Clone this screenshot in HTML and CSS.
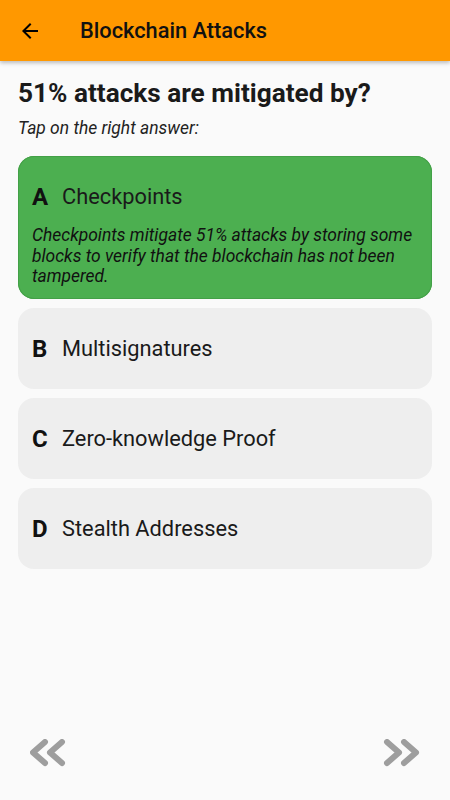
FILE: index.html
```html
<!DOCTYPE html>
<html lang="en">
<head>
  <meta charset="UTF-8">
  <title>Blockchain Attacks</title>
  <link rel="stylesheet" href="styles.css">
</head>
<body>

  <header class="app-bar">
    <button class="back-button" aria-label="Back">
      <svg viewBox="0 0 24 24" width="24" height="24"><path d="M20 11H7.83l5.59-5.59L12 4l-8 8 8 8 1.41-1.41L7.83 13H20v-2z" fill="#000"/></svg>
    </button>
    <h1 class="app-title">Blockchain Attacks</h1>
  </header>

  <main class="quiz">
    <h2 class="question">51% attacks are mitigated by?</h2>
    <p class="hint">Tap on the right answer:</p>

    <div class="answer correct">
      <div class="answer-row">
        <span class="letter">A</span>
        <span class="answer-text">Checkpoints</span>
      </div>
      <p class="explanation">Checkpoints mitigate 51% attacks by storing some blocks to verify that the blockchain has not been tampered.</p>
    </div>

    <div class="answer">
      <div class="answer-row">
        <span class="letter">B</span>
        <span class="answer-text">Multisignatures</span>
      </div>
    </div>

    <div class="answer">
      <div class="answer-row">
        <span class="letter">C</span>
        <span class="answer-text">Zero-knowledge Proof</span>
      </div>
    </div>

    <div class="answer">
      <div class="answer-row">
        <span class="letter">D</span>
        <span class="answer-text">Stealth Addresses</span>
      </div>
    </div>
  </main>

  <footer class="nav">
    <button class="nav-button" aria-label="Previous">
      <svg viewBox="0 0 40 30" width="40" height="30">
        <polyline points="15,3 3,13.5 15,24" />
        <polyline points="32,3 20,13.5 32,24" />
      </svg>
    </button>
    <button class="nav-button" aria-label="Next">
      <svg viewBox="0 0 40 30" width="40" height="30">
        <polyline points="5,3 17,13.5 5,24" />
        <polyline points="22,3 34,13.5 22,24" />
      </svg>
    </button>
  </footer>

</body>
</html>
```

FILE: styles.css
```css
html, body {
  margin: 0;
  padding: 0;
}
body {
  font-family: Roboto, "Noto Sans", Arial, sans-serif;
  background: #fafafa;
  color: rgba(0,0,0,0.87);
  width: 450px;
  height: 800px;
  display: flex;
  flex-direction: column;
  overflow: hidden;
}
.app-bar {
  height: 61px;
  background: #ff9800;
  display: flex;
  align-items: center;
  box-shadow: 0 2px 4px rgba(0,0,0,0.25);
  flex-shrink: 0;
}
.back-button {
  width: 24px;
  height: 24px;
  margin-left: 18px;
  padding: 0;
  border: none;
  background: none;
  display: flex;
}
.app-title {
  margin: 0 0 0 38px;
  font-size: 21.8px;
  font-weight: 500;
  color: #111;
}
.quiz {
  flex: 1;
  padding: 16px 18px 0;
}
.question {
  margin: 0;
  font-size: 26.2px;
  font-weight: 700;
  line-height: 32px;
  color: #1a1a1a;
}
.hint {
  margin: 8px 0 0;
  font-size: 17.45px;
  font-style: italic;
  line-height: 22px;
  color: #222;
}
.answer {
  background: #eeeeee;
  border-radius: 16px;
  padding: 12px 14px;
  margin-top: 9px;
}
.hint + .answer {
  margin-top: 17px;
}
.answer.correct {
  background: #4caf50;
  box-shadow: inset 0 0 0 1px #43a047;
}
.answer-row {
  height: 57px;
  display: flex;
  align-items: center;
}
.letter {
  width: 30px;
  font-size: 24px;
  font-weight: 700;
  color: #111;
}
.answer-text {
  font-size: 21.8px;
  color: #1a1a1a;
}
.explanation {
  margin: 0;
  font-size: 17.45px;
  font-style: italic;
  line-height: 20.7px;
  color: #111;
}
.nav {
  height: 108px;
  padding: 0 28px 0 30px;
  display: flex;
  justify-content: space-between;
  align-items: flex-start;
  flex-shrink: 0;
}
.nav-button {
  margin-top: 47px;
  padding: 0;
  border: none;
  background: none;
  display: flex;
}
.nav-button polyline {
  fill: none;
  stroke: #9e9e9e;
  stroke-width: 6;
  stroke-linecap: round;
  stroke-linejoin: round;
}
```
